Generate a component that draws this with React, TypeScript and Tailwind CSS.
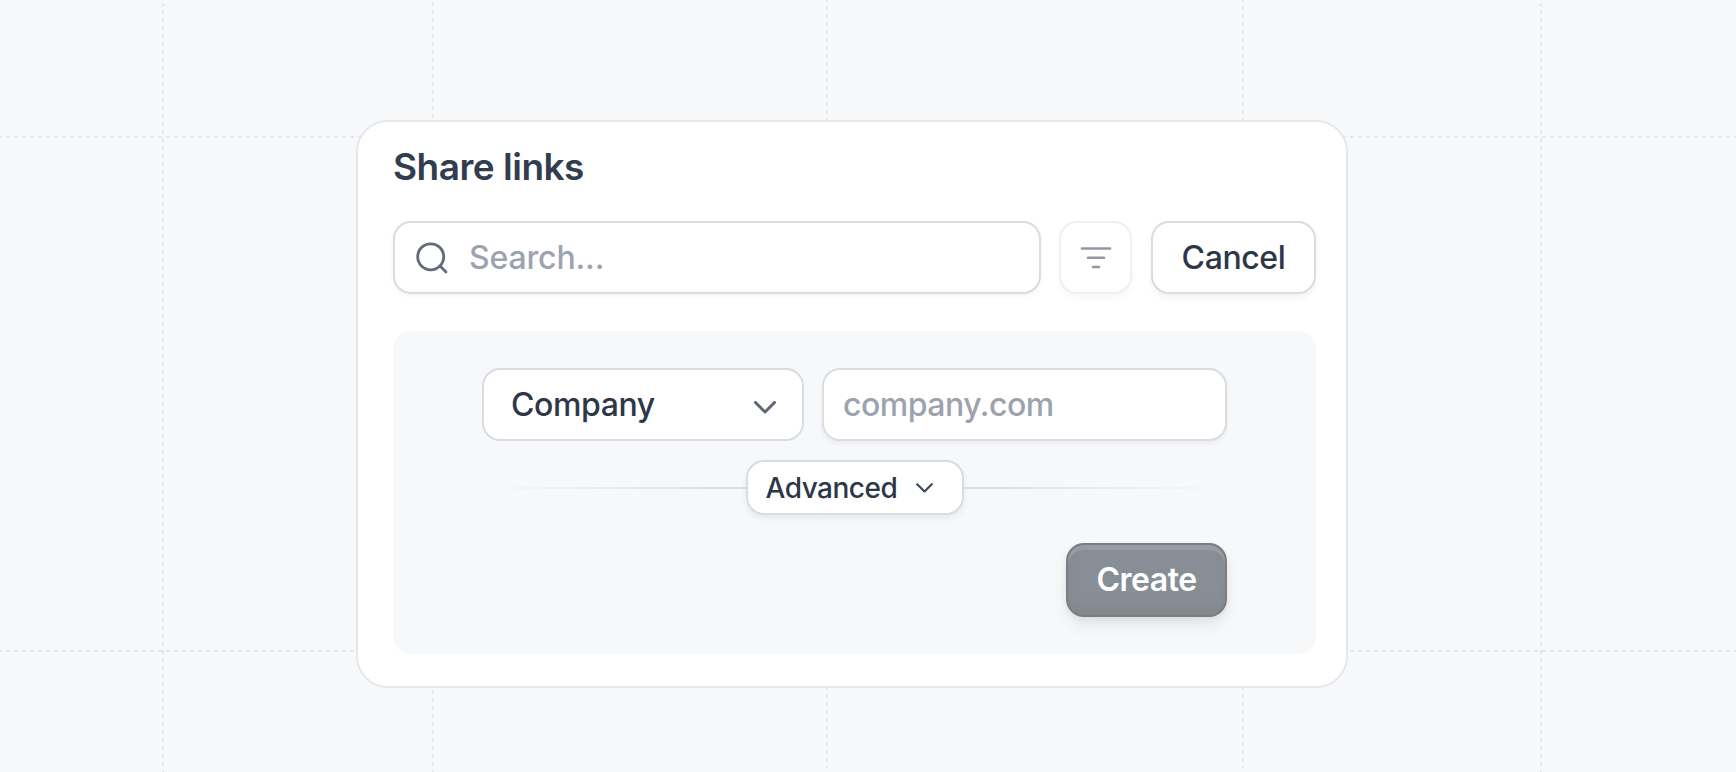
import type { ReactNode } from "react";
import { clsx } from "clsx";

const COLUMNS = [
  { x: 163, from: 4, to: 772, offset: 2 },
  { x: 433, from: 0, to: 772, offset: 6 },
  { x: 827, from: 0, to: 768, offset: 2 },
  { x: 1243, from: 0, to: 768, offset: 2 },
  { x: 1541, from: 4, to: 772, offset: 2 },
];
const ROWS = [137, 651];

function GridLines() {
  return (
    <svg
      className="absolute inset-0"
      width="1736"
      height="772"
      fill="none"
      stroke="#e5e7eb"
      strokeWidth="2"
      strokeDasharray="4 4"
    >
      {COLUMNS.map(({ x, from, to, offset }) => (
        <path key={x} d={`M${x} ${from}V${to}`} strokeDashoffset={offset} />
      ))}
      {ROWS.map((y) => (
        <path key={y} d={`M0 ${y}H1736`} strokeDashoffset="2" />
      ))}
    </svg>
  );
}

function Chevron({ className, width }: { className: string; width: number }) {
  return (
    <svg
      className={className}
      viewBox="0 0 22 13"
      fill="none"
      stroke="currentColor"
      strokeWidth={width}
      strokeLinecap="round"
      strokeLinejoin="round"
    >
      <path d="M1.5 1.5L11 11L20.5 1.5" />
    </svg>
  );
}

function Box({ className, children }: { className?: string; children: ReactNode }) {
  return (
    <div
      className={clsx(
        "flex h-[73px] items-center rounded-[18px] border-2 bg-white text-[32px] font-medium",
        className,
      )}
    >
      {children}
    </div>
  );
}

export default function App() {
  return (
    <div className="relative flex h-[772px] w-[1736px] overflow-hidden bg-[#f7f8fa] pt-[120px] pl-[356px] font-['Inter',sans-serif] text-[#2d3748]">
      <GridLines />

      <main className="relative h-[568px] w-[992px] rounded-[32px] border-2 border-[#e5e7eb] bg-white pt-[22px] pr-[30px] pl-[35px]">
        <h1 className="h-[44px] text-[37px] leading-[45px] font-semibold tracking-[-0.5px] text-[#323d4f]">
          Share links
        </h1>

        <div className="mt-[33px] flex">
          <Box className="w-[648px] border-[#d9dce1] pl-[21px] text-[#9ca3af] shadow-[0_2px_4px_rgba(0,0,0,0.05)]">
            <svg
              width="32"
              height="32"
              viewBox="0 0 32 32"
              fill="none"
              stroke="#636b7a"
              strokeWidth="2.8"
              strokeLinecap="round"
            >
              <circle cx="14.7" cy="14.8" r="13" />
              <path d="M24.3 24.3L30 30" />
            </svg>
            <span className="ml-[21px] tracking-[-0.15px]">Search...</span>
          </Box>
          <Box className="ml-[18px] w-[73px] justify-center border-[#eff0f2] shadow-[0_4px_6px_rgba(0,0,0,0.03)]">
            <svg
              width="32"
              height="24"
              viewBox="0 0 32 24"
              fill="none"
              stroke="#9196a1"
              strokeWidth="2.6"
              strokeLinecap="round"
            >
              <path d="M2 2.5H30M8 11.7H24M13 21H19" />
            </svg>
          </Box>
          <Box className="ml-[19px] w-[165px] justify-center border-[#d9dce1] shadow-[0_4px_6px_rgba(0,0,0,0.05)]">
            <span className="tracking-[-0.4px]">Cancel</span>
          </Box>
        </div>

        <section className="mt-[37px] h-[323px] w-[923px] rounded-[18px] bg-[#f7f8fa] pt-[37px] pr-[89px] pl-[89px]">
          <div className="flex justify-between">
            <Box className="w-[322px] justify-between border-[#d9dce1] pr-[26px] pl-[27px]">
              <span className="tracking-[-0.4px]">Company</span>
              <Chevron className="mt-[6px] h-[13px] w-[22px] text-[#5d6676]" width={3} />
            </Box>
            <Box className="w-[405px] border-[#d9dce1] pl-[19px] text-[#9ca3af] shadow-[0_3px_4px_rgba(0,0,0,0.05)]">
              <span className="tracking-[-0.5px]">company.com</span>
            </Box>
          </div>

          <div className="mt-[19px] flex items-center">
            <div className="h-[2px] flex-1 bg-linear-to-r from-transparent to-[#d9dce1]" />
            <div className="flex h-[55px] w-[218px] items-center rounded-[18px] border-2 border-[#d9dce1] bg-white pl-[18px] text-[28px] font-medium shadow-[0_4px_6px_rgba(0,0,0,0.06)]">
              <span className="tracking-[-0.5px]">Advanced</span>
              <Chevron className="ml-[19px] h-[10px] w-[17px] text-[#3f495a]" width={2.8} />
            </div>
            <div className="h-[2px] flex-1 bg-linear-to-l from-transparent to-[#d9dce1]" />
          </div>

          <div className="mt-[28px] flex justify-end">
            <button className="flex h-[74px] w-[161px] items-center justify-center rounded-[18px] border-2 border-[#7b7d80] bg-[#888e96] text-[32px] font-semibold text-white shadow-[inset_0_5px_1px_rgba(255,255,255,0.14),inset_0_-8px_8px_rgba(125,125,120,0.35),0_10px_16px_rgba(0,0,0,0.06),0_3px_6px_rgba(0,0,0,0.06)]">
              <span className="tracking-[-0.5px]">Create</span>
            </button>
          </div>
        </section>
      </main>
    </div>
  );
}
